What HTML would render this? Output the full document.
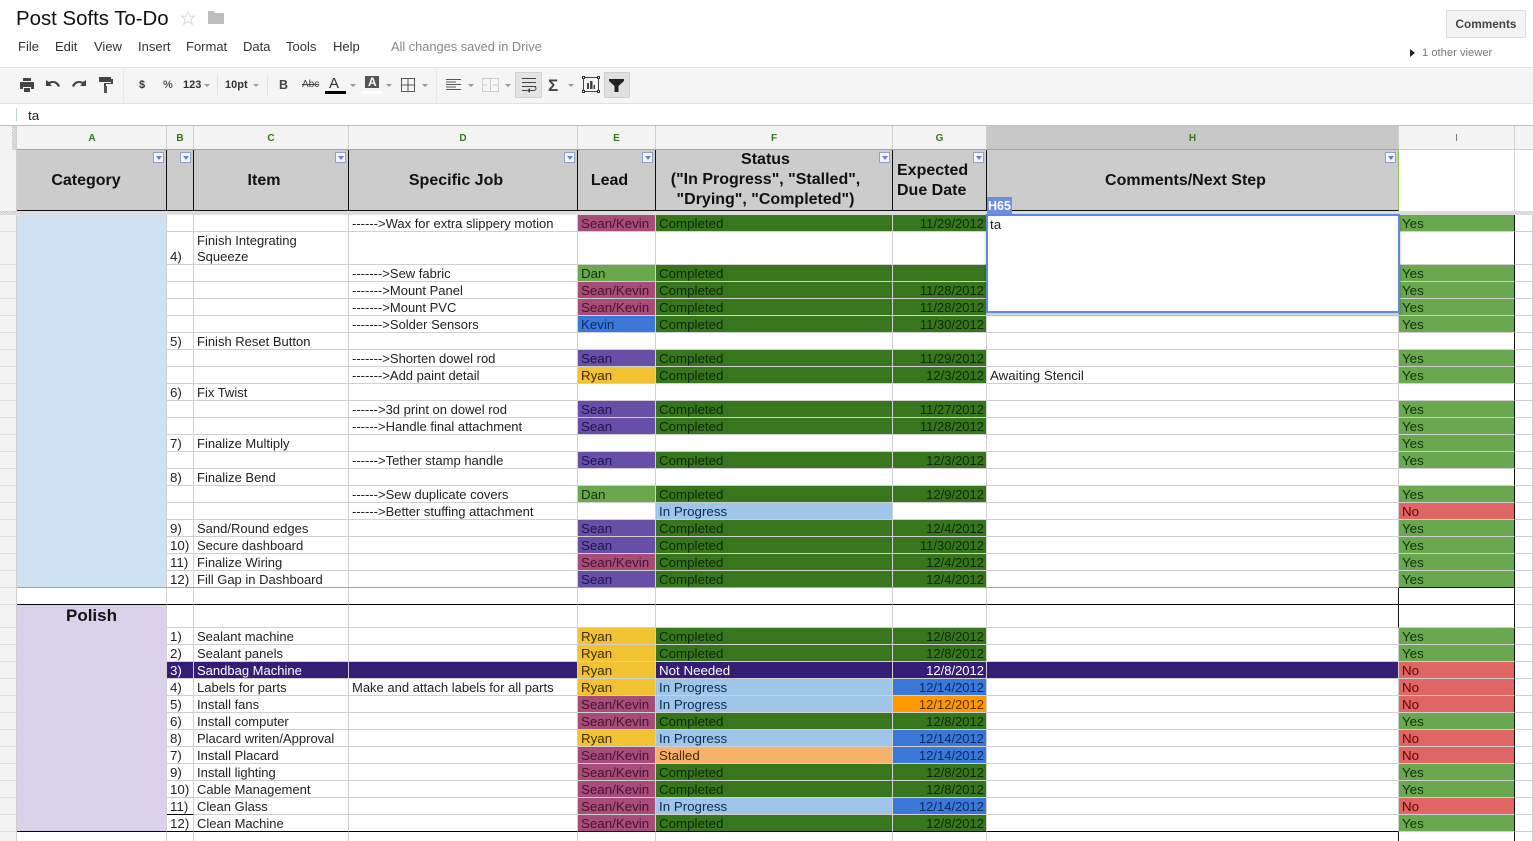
<!DOCTYPE html>
<html><head><meta charset="utf-8"><title>Post Softs To-Do</title>
<style>
html,body{margin:0;padding:0;background:#fff;width:1533px;height:841px;overflow:hidden;font-family:"Liberation Sans",Arial,sans-serif;color:#111}
#w{position:absolute;left:0;top:0;width:1533px;height:841px;overflow:hidden}
.t{position:absolute;white-space:nowrap}
.b{position:absolute}
table{position:absolute;left:0;top:215px;border-collapse:separate;border-spacing:0;table-layout:fixed;width:1533px;font-size:13.33px;color:#222}
td{padding:2px 0 0 3px;margin:0;box-sizing:border-box;border-right:1px solid #d0d0d0;border-bottom:1px solid #d0d0d0;overflow:hidden;white-space:nowrap;height:17px;line-height:14px;vertical-align:bottom;color:#222}
tr{height:17px}
td:nth-child(4),td:nth-child(5),td:nth-child(8){font-size:13px}
td:first-child{background:#f3f3f3;border-right:1px solid #cfcfcf;border-bottom:1px solid #dedede;padding:0}
td:nth-child(2){background:#cfe2f3;border-bottom-color:#cfe2f3;border-right-color:#d0d0d0}
tr.pl td:nth-child(2){background:#d9d2e9;border-bottom-color:#d9d2e9}
td:nth-child(11){padding:0}
td:nth-child(10){border-right:1px solid #111}
.w{white-space:normal;line-height:16px;padding-top:0}
.sk{background:#a64d79;color:#4c1130}
.s{background:#674ea7;color:#20124d}
.r{background:#f1c232;color:#3d2b00}
.d{background:#6aa84f;color:#12300a}
.k{background:#3c78d8;color:#0a2a66}
.c{background:#38761d;color:#0c2a06}
.g{background:#38761d;color:#0c2a06;text-align:right;padding:2px 2px 0 0}
.p{background:#9fc5e8;color:#0b2a55}
.st{background:#f6b26b;color:#4a2600}
.gb{background:#3c78d8;color:#0a2a66;text-align:right;padding:2px 2px 0 0}
.go{background:#ff9900;color:#5a2a00;text-align:right;padding:2px 2px 0 0}
.y{background:#6aa84f;color:#12300a}
.n{background:#e06666;color:#660000}
.u{background:#351c75;color:#fff}
.ur{background:#351c75;color:#fff;text-align:right;padding:2px 2px 0 0}
.lb td:nth-child(9){border-right-color:#111}
.lb td:nth-child(10){border-right-color:#111}
.hd{position:absolute;top:150px;height:61px;background:#ccc;font-weight:bold;font-size:16px;line-height:20px;text-align:center;color:#111;box-sizing:border-box;border-right:1px solid #111;border-bottom:1px solid #111}
.f{position:absolute;top:152px;width:11px;height:11px;box-sizing:border-box;border:1px solid #8f9fd0;background:#f4f6fc}
.f:after{content:"";position:absolute;left:2px;top:3px;border:3px solid transparent;border-top:4px solid #6b7fc0;border-bottom:0}
.cl{position:absolute;top:126px;height:24px;box-sizing:border-box;background:#f3f3f3;border-right:1px solid #cfcfcf;font-size:10px;font-weight:bold;color:#38761d;text-align:center;line-height:25px;border-bottom:1px solid #8bc34a}
.ar{position:absolute;top:84px;width:0;height:0;border:3px solid transparent;border-top:3px solid #999;border-bottom:0}
.sep{position:absolute;top:75px;width:1px;height:20px;background:#e2e2e2}
.tb{font-size:11px;font-weight:bold;color:#333;top:79px}
.m1{font-size:13px;color:#333;top:39px}
</style></head><body><div id="w">

<div class="t" style="left:16px;top:7px;font-size:20.400px;line-height:24px;color:#111">Post Softs To-Do</div>
<svg class="b" style="left:180px;top:10px" width="16" height="16" viewBox="0 0 18 17"><path d="M9 1.5l2.200 5h5.300l-4.300 3.400 1.600 5.600L9 12.300l-4.800 3.200 1.600-5.600L1.500 6.500h5.300z" fill="#fff" stroke="#dcdcdc" stroke-width="1.200"/></svg>
<svg class="b" style="left:207px;top:10px" width="18" height="15" viewBox="0 0 18 15"><path d="M1 1h6l1 2h9v11H1z" fill="#bdbdbd"/></svg>

<div class="t m1" style="left:18px">File</div>
<div class="t m1" style="left:55px">Edit</div>
<div class="t m1" style="left:94px">View</div>
<div class="t m1" style="left:138px">Insert</div>
<div class="t m1" style="left:186px">Format</div>
<div class="t m1" style="left:243px">Data</div>
<div class="t m1" style="left:286px">Tools</div>
<div class="t m1" style="left:333px">Help</div>
<div class="t" style="left:391px;top:39px;font-size:12.800px;color:#888">All changes saved in Drive</div>

<div class="b" style="left:1446px;top:10px;width:80px;height:28px;box-sizing:border-box;background:#f3f3f3;border:1px solid #dcdcdc;border-radius:2px;font-size:11.800px;font-weight:bold;color:#444;text-align:center;line-height:26px">Comments</div>
<div class="b" style="left:1410px;top:49px;border:4px solid transparent;border-left:5px solid #222;border-right:0"></div>
<div class="t" style="left:1422px;top:47px;font-size:11.200px;color:#777">1 other viewer</div>

<!-- toolbar -->
<div class="b" style="left:0;top:67px;width:1533px;height:37px;box-sizing:border-box;background:#f5f5f5;border-top:1px solid #e2e2e2;border-bottom:1px solid #e2e2e2"></div>
<div class="sep" style="left:123px;top:68px;height:35px;background:#e8e8e8"></div>
<div class="sep" style="left:217px"></div>
<div class="sep" style="left:267px"></div>
<div class="sep" style="left:436px;top:68px;height:35px;background:#e8e8e8"></div>
<svg class="b" style="left:19px;top:77px" width="16" height="16" viewBox="0 0 16 16"><path d="M4 1h8v3H4z" fill="#444"/><path d="M1 5h14v7h-3v-2H4v2H1z" fill="#444"/><path d="M5 11h6v4H5z" fill="#444"/></svg>
<svg class="b" style="left:45px;top:78px" width="16" height="14" viewBox="0 0 16 14"><path d="M1 2v6h6L5 6c3-2 6-1 8 3l2-1c-2-5-7-6-11-4z" fill="#444"/></svg>
<svg class="b" style="left:71px;top:78px" width="16" height="14" viewBox="0 0 16 14"><path d="M15 2v6H9l2-2c-3-2-6-1-8 3L1 8c2-5 7-6 11-4z" fill="#444"/></svg>
<svg class="b" style="left:98px;top:76px" width="16" height="18" viewBox="0 0 16 18"><path d="M1 1h12v5H1z" fill="#444"/><path d="M13 3h2v5H8v2H6V7h7z" fill="#444"/><path d="M6 10h3v7H6z" fill="#555"/></svg>
<div class="t tb" style="left:139px">$</div>
<div class="t tb" style="left:163px;color:#555">%</div>
<div class="t tb" style="left:183px">123</div>
<div class="ar" style="left:204px"></div>
<div class="t tb" style="left:225px">10pt</div>
<div class="ar" style="left:253px"></div>
<div class="t" style="left:279px;top:78px;font-size:12.500px;font-weight:bold;color:#444">B</div>
<div class="t" style="left:302px;top:79px;font-size:10px;color:#444;text-decoration:line-through">Abc</div>
<div class="t" style="left:329px;top:75px;font-size:15px;color:#333">A</div>
<div class="b" style="left:325px;top:91px;width:21px;height:3px;background:#000"></div>
<div class="ar" style="left:350px"></div>
<div class="b" style="left:365px;top:76px;width:14px;height:12px;background:#555"></div>
<div class="t" style="left:368px;top:75px;font-size:12px;font-weight:bold;color:#fff">A</div>
<div class="b" style="left:361px;top:91px;width:21px;height:3px;background:#fff"></div>
<div class="ar" style="left:386px"></div>
<svg class="b" style="left:401px;top:78px" width="14" height="14" viewBox="0 0 14 14"><path d="M.5.5h13v13H.5zM7 .5v13M.5 7h13" fill="none" stroke="#555"/></svg>
<div class="ar" style="left:422px"></div>
<svg class="b" style="left:446px;top:79px" width="15" height="12" viewBox="0 0 15 12"><path d="M0 .5h15M0 3h10M0 5.500h15M0 8h10M0 10.500h15" stroke="#555" fill="none"/></svg>
<div class="ar" style="left:468px"></div>
<svg class="b" style="left:482px;top:78px" width="17" height="14" viewBox="0 0 17 14"><path d="M.5.500h16v13H.5zM8.500.5v13M.5 7h5M11 7h5" fill="none" stroke="#ccc"/></svg>
<div class="ar" style="left:505px"></div>
<div class="b" style="left:515px;top:72px;width:27px;height:26px;box-sizing:border-box;background:#e4e4e4;border:1px solid #d0d0d0;border-radius:1px"></div>
<svg class="b" style="left:521px;top:78px" width="16" height="15" viewBox="0 0 16 15"><path d="M1 .5h14M1 4.500h14M1 8.500h14M1 12.500h5" stroke="#444" fill="none"/><path d="M9 12.500h4a2 2 0 0 0 0-4" stroke="#444" fill="none"/><path d="M9 10v5l-3-2.500z" fill="#444"/></svg>
<div class="t" style="left:548px;top:76px;font-size:17px;font-weight:bold;color:#444">Σ</div>
<div class="ar" style="left:568px"></div>
<svg class="b" style="left:582px;top:76px" width="18" height="17" viewBox="0 0 18 17"><path d="M1.500 1.500h15v14h-15z" fill="#f5f5f5" stroke="#444"/><path d="M.5.500h2v2h-2zM15.500.500h2v2h-2zM.5 14.500h2v2h-2zM15.500 14.500h2v2h-2z" fill="#f5f5f5" stroke="#333"/><path d="M5 7h2v6H5zM8 5h2.500v8H8zM11.500 9H13v4h-1.500z" fill="#444"/></svg>
<div class="b" style="left:604px;top:72px;width:26px;height:26px;box-sizing:border-box;background:#e0e0e0;border:1px solid #cfcfcf;border-radius:1px"></div>
<svg class="b" style="left:609px;top:79px" width="15" height="13" viewBox="0 0 15 13"><path d="M0 0h15v2L9.500 7v6h-4V7L0 2z" fill="#222"/></svg>

<!-- formula bar -->
<div class="b" style="left:16px;top:108px;width:1px;height:13px;background:#b7d7d7"></div>
<div class="t" style="left:28px;top:108px;font-size:13.33px;color:#222">ta</div>
<div class="b" style="left:0;top:125px;width:1533px;height:1px;background:#bdbdbd"></div>

<!-- column heads -->
<div class="b" style="left:0;top:126px;width:17px;height:90px;background:#f3f3f3;box-sizing:border-box;border-right:1px solid #cfcfcf"></div>
<div class="b" style="left:12px;top:126px;width:4px;height:24px;background:repeating-linear-gradient(45deg,#c4c4c4,#c4c4c4 1px,#eee 1px,#eee 2px)"></div>
<div class="cl" style="left:17px;width:150px;padding-left:1px">A</div>
<div class="cl" style="left:167px;width:27px">B</div>
<div class="cl" style="left:194px;width:155px">C</div>
<div class="cl" style="left:349px;width:229px">D</div>
<div class="cl" style="left:578px;width:78px">E</div>
<div class="cl" style="left:656px;width:237px">F</div>
<div class="cl" style="left:893px;width:94px">G</div>
<div class="cl" style="left:987px;width:412px;background:#c8c8c8">H</div>
<div class="cl" style="left:1399px;width:116px;color:#777;font-weight:normal;border-bottom-color:#cfcfcf">I</div>
<div class="cl" style="left:1515px;width:18px;border-right:0;border-bottom-color:#cfcfcf"></div>

<!-- frozen header row -->
<div class="hd" style="left:17px;width:150px;padding:21px 11px 0 0;text-align:center">Category</div>
<div class="hd" style="left:167px;width:27px"></div>
<div class="hd" style="left:194px;width:155px;padding:21px 14px 0 0">Item</div>
<div class="hd" style="left:349px;width:229px;padding:21px 14px 0 0">Specific Job</div>
<div class="hd" style="left:578px;width:78px;padding:21px 14px 0 0">Lead</div>
<div class="hd" style="left:656px;width:237px;padding:0 17px 0 0;line-height:20px">Status<br>("In Progress", "Stalled",<br>"Drying", "Completed")</div>
<div class="hd" style="left:893px;width:94px;padding:11px 0 0 4px;text-align:left">Expected<br>Due Date</div>
<div class="hd" style="left:987px;width:412px;padding:21px 14px 0 0;border-right-color:#8bc34a">Comments/Next Step</div>
<div class="b" style="left:1399px;top:150px;width:115px;height:61px;background:#fff"></div>
<div class="b" style="left:1514px;top:150px;width:1px;height:61px;background:#d0d0d0"></div>
<div class="b" style="left:0;top:211px;width:1533px;height:4px;background:#dcdcdc"></div>
<div class="b" style="left:0;top:211px;width:16px;height:3px;background:repeating-linear-gradient(45deg,#c4c4c4,#c4c4c4 1px,#eee 1px,#eee 2px)"></div>
<div class="f" style="left:153px"></div><div class="f" style="left:180px"></div><div class="f" style="left:335px"></div><div class="f" style="left:564px"></div><div class="f" style="left:642px"></div><div class="f" style="left:879px"></div><div class="f" style="left:973px"></div><div class="f" style="left:1385px"></div>

<table>
<colgroup><col style="width:17px"><col style="width:150px"><col style="width:27px"><col style="width:155px"><col style="width:229px"><col style="width:78px"><col style="width:237px"><col style="width:94px"><col style="width:412px"><col style="width:116px"><col style="width:18px"></colgroup>
<tr><td><td><td><td><td>------&gt;Wax for extra slippery motion<td class=sk>Sean/Kevin<td class=c>Completed<td class=g>11/29/2012<td><td class=y>Yes<td>
<tr style="height:33px"><td style="height:33px"><td style="height:33px"><td style="height:33px">4)<td class=w style="height:33px"><div style="position:relative;top:1px">Finish Integrating Squeeze</div><td style="height:33px"><td style="height:33px"><td style="height:33px"><td style="height:33px"><td style="height:33px"><td style="height:33px"><td style="height:33px">
<tr><td><td><td><td><td>-------&gt;Sew fabric<td class=d>Dan<td class=c>Completed<td class=g><td><td class=y>Yes<td>
<tr><td><td><td><td><td>-------&gt;Mount Panel<td class=sk>Sean/Kevin<td class=c>Completed<td class=g>11/28/2012<td><td class=y>Yes<td>
<tr><td><td><td><td><td>-------&gt;Mount PVC<td class=sk>Sean/Kevin<td class=c>Completed<td class=g>11/28/2012<td><td class=y>Yes<td>
<tr><td><td><td><td><td>-------&gt;Solder Sensors<td class=k>Kevin<td class=c>Completed<td class=g>11/30/2012<td><td class=y>Yes<td>
<tr><td><td><td>5)<td>Finish Reset Button<td><td><td><td><td><td><td>
<tr><td><td><td><td><td>-------&gt;Shorten dowel rod<td class=s>Sean<td class=c>Completed<td class=g>11/29/2012<td><td class=y>Yes<td>
<tr><td><td><td><td><td>-------&gt;Add paint detail<td class=r>Ryan<td class=c>Completed<td class=g>12/3/2012<td>Awaiting Stencil<td class=y>Yes<td>
<tr><td><td><td>6)<td>Fix Twist<td><td><td><td><td><td><td>
<tr><td><td><td><td><td>------&gt;3d print on dowel rod<td class=s>Sean<td class=c>Completed<td class=g>11/27/2012<td><td class=y>Yes<td>
<tr><td><td><td><td><td>------&gt;Handle final attachment<td class=s>Sean<td class=c>Completed<td class=g>11/28/2012<td><td class=y>Yes<td>
<tr><td><td><td>7)<td>Finalize Multiply<td><td><td><td><td><td class=y>Yes<td>
<tr><td><td><td><td><td>------&gt;Tether stamp handle<td class=s>Sean<td class=c>Completed<td class=g>12/3/2012<td><td class=y>Yes<td>
<tr><td><td><td>8)<td>Finalize Bend<td><td><td><td><td><td><td>
<tr><td><td><td><td><td>------&gt;Sew duplicate covers<td class=d>Dan<td class=c>Completed<td class=g>12/9/2012<td><td class=y>Yes<td>
<tr><td><td><td><td><td>------&gt;Better stuffing attachment<td><td class=p>In Progress<td><td><td class=n>No<td>
<tr><td><td><td>9)<td>Sand/Round edges<td><td class=s>Sean<td class=c>Completed<td class=g>12/4/2012<td><td class=y>Yes<td>
<tr><td><td><td>10)<td>Secure dashboard<td><td class=s>Sean<td class=c>Completed<td class=g>11/30/2012<td><td class=y>Yes<td>
<tr><td><td><td>11)<td>Finalize Wiring<td><td class=sk>Sean/Kevin<td class=c>Completed<td class=g>12/4/2012<td><td class=y>Yes<td>
<tr><td><td><td>12)<td>Fill Gap in Dashboard<td><td class=s>Sean<td class=c>Completed<td class=g>12/4/2012<td><td class=y>Yes<td>
<tr class=lb><td style="background:#f3f3f3"><td style="background:#fff;border-bottom-color:#000"><td style="border-bottom-color:#000"><td style="border-bottom-color:#000"><td style="border-bottom-color:#000"><td style="border-bottom-color:#000"><td style="border-bottom-color:#000"><td style="border-bottom-color:#000"><td style="border-bottom-color:#000"><td style="border-bottom-color:#000"><td>
<tr class="pl lb" style="height:23px"><td style="height:23px"><td style="height:23px;font-size:17px;font-weight:bold;text-align:center;color:#111;padding:0;line-height:22px;vertical-align:middle">Polish<td style="height:23px"><td style="height:23px"><td style="height:23px"><td style="height:23px"><td style="height:23px"><td style="height:23px"><td style="height:23px"><td style="height:23px"><td style="height:23px">
<tr class=pl><td><td><td>1)<td>Sealant machine<td><td class=r>Ryan<td class=c>Completed<td class=g>12/8/2012<td><td class=y>Yes<td>
<tr class=pl><td><td><td>2)<td>Sealant panels<td><td class=r>Ryan<td class=c>Completed<td class=g>12/8/2012<td><td class=y>Yes<td>
<tr class=pl><td><td><td class=u>3)<td class=u>Sandbag Machine<td class=u><td class=r>Ryan<td class=u>Not Needed<td class=ur>12/8/2012<td class=u><td class=n>No<td>
<tr class=pl><td><td><td>4)<td>Labels for parts<td>Make and attach labels for all parts<td class=r>Ryan<td class=p>In Progress<td class=gb>12/14/2012<td><td class=n>No<td>
<tr class=pl><td><td><td>5)<td>Install fans<td><td class=sk>Sean/Kevin<td class=p>In Progress<td class=go>12/12/2012<td><td class=n>No<td>
<tr class=pl><td><td><td>6)<td>Install computer<td><td class=sk>Sean/Kevin<td class=c>Completed<td class=g>12/8/2012<td><td class=y>Yes<td>
<tr class=pl><td><td><td>8)<td>Placard writen/Approval<td><td class=r>Ryan<td class=p>In Progress<td class=gb>12/14/2012<td><td class=n>No<td>
<tr class=pl><td><td><td>7)<td>Install Placard<td><td class=sk>Sean/Kevin<td class=st>Stalled<td class=gb>12/14/2012<td><td class=n>No<td>
<tr class=pl><td><td><td>9)<td>Install lighting<td><td class=sk>Sean/Kevin<td class=c>Completed<td class=g>12/8/2012<td><td class=y>Yes<td>
<tr class=pl><td><td><td>10)<td>Cable Management<td><td class=sk>Sean/Kevin<td class=c>Completed<td class=g>12/8/2012<td><td class=y>Yes<td>
<tr class=pl><td><td><td style="border-bottom-color:#000">11)<td>Clean Glass<td><td class=sk>Sean/Kevin<td class=p>In Progress<td class=gb>12/14/2012<td><td class=n>No<td>
<tr class=pl><td><td style="border-bottom-color:#000"><td style="border-bottom-color:#000">12)<td style="border-bottom-color:#000">Clean Machine<td style="border-bottom-color:#000"><td style="border-bottom-color:#000" class=sk>Sean/Kevin<td style="border-bottom-color:#000" class=c>Completed<td style="border-bottom-color:#000" class=g>12/8/2012<td style="border-bottom-color:#000"><td class=y>Yes<td>
<tr class=lb><td style="background:#f3f3f3"><td style="background:#fff;border-bottom-color:#d0d0d0"><td><td><td><td><td><td><td><td><td>
</table>

<!-- line under first block -->
<div class="b" style="left:17px;top:587px;width:1382px;height:1px;background:#8bc34a"></div>
<div class="b" style="left:1399px;top:587px;width:116px;height:1px;background:#111"></div>

<!-- active cell -->
<div class="b" style="left:986px;top:214px;width:414px;height:99px;box-sizing:border-box;background:#fff;border:2px solid #5b8ae0;box-shadow:0 2px 3px rgba(0,0,0,.25);font-size:13.33px;line-height:16px;padding:1px 0 0 2px;color:#222">ta</div>
<div class="b" style="left:987px;top:197px;width:25px;height:17px;background:#6d8fe0;color:#fff;font-size:12.500px;font-weight:bold;line-height:18px;padding-left:1px;box-sizing:border-box;overflow:hidden">H65</div>
</div></body></html>
